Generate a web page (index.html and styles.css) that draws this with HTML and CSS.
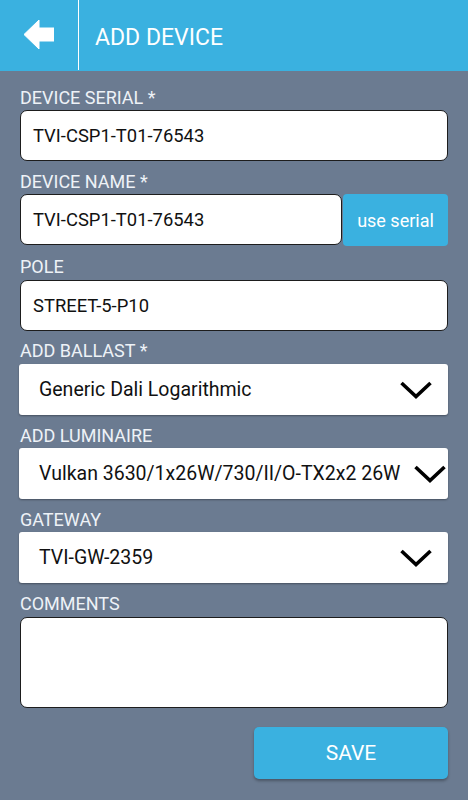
FILE: index.html
```html
<!DOCTYPE html>
<html>
<head>
<meta charset="utf-8">
<link rel="stylesheet" href="styles.css">
</head>
<body>
<header class="topbar">
  <div class="back">
    <svg width="30" height="29" viewBox="0 0 30 29"><path d="M0 14.5 L15 0 L15 8 L30 8 L30 21 L15 21 L15 29 Z" fill="#fff" stroke="#fff" stroke-width="1" stroke-linejoin="round"/></svg>
  </div>
  <div class="title">ADD DEVICE</div>
</header>
<main class="form">
  <div class="group first">
    <div class="label">DEVICE SERIAL *</div>
    <div class="input">TVI-CSP1-T01-76543</div>
  </div>
  <div class="group">
    <div class="label">DEVICE NAME *</div>
    <div class="row">
      <div class="input name">TVI-CSP1-T01-76543</div>
      <div class="use-serial">use serial</div>
    </div>
  </div>
  <div class="group">
    <div class="label">POLE</div>
    <div class="input">STREET-5-P10</div>
  </div>
  <div class="group">
    <div class="label">ADD BALLAST *</div>
    <div class="select"><span class="val">Generic Dali Logarithmic</span><svg class="chev" width="34" height="20" viewBox="0 0 34 20"><polyline points="2.5,3 17,16.5 31.5,3" fill="none" stroke="#000" stroke-width="3.6"/></svg></div>
  </div>
  <div class="group">
    <div class="label">ADD LUMINAIRE</div>
    <div class="select"><span class="val">Vulkan 3630/1x26W/730/II/O-TX2x2 26W</span><svg class="chev" width="34" height="20" viewBox="0 0 34 20"><polyline points="2.5,3 17,16.5 31.5,3" fill="none" stroke="#000" stroke-width="3.6"/></svg></div>
  </div>
  <div class="group">
    <div class="label">GATEWAY</div>
    <div class="select"><span class="val">TVI-GW-2359</span><svg class="chev" width="34" height="20" viewBox="0 0 34 20"><polyline points="2.5,3 17,16.5 31.5,3" fill="none" stroke="#000" stroke-width="3.6"/></svg></div>
  </div>
  <div class="group">
    <div class="label">COMMENTS</div>
    <div class="textarea"></div>
  </div>
  <div class="actions">
    <div class="save">SAVE</div>
  </div>
</main>
</body>
</html>
```
FILE: styles.css
```css
* { box-sizing: border-box; }
html, body {
  margin: 0;
  padding: 0;
  background: #6b7b91;
  font-family: Roboto, "Liberation Sans", sans-serif;
  width: 468px;
  height: 800px;
  overflow: hidden;
}
.topbar {
  height: 71px;
  background: #3ab1e0;
  display: flex;
  align-items: stretch;
}
.back {
  width: 79px;
  border-right: 1px solid #ffffff;
  display: flex;
  align-items: center;
  padding-left: 24px;
  padding-bottom: 2px;
  margin-bottom: 1px;
}
.back svg { display: block; }
.title {
  display: flex;
  align-items: center;
  padding-left: 16px;
  padding-top: 4px;
  color: #ffffff;
  font-size: 23px;
}
.form {
  padding: 0 20px;
}
.group {
  padding-top: 10.8px;
}
.group.first {
  padding-top: 16.5px;
}
.label {
  color: #eef2f7;
  font-size: 18px;
  line-height: 20px;
  margin-bottom: 2.5px;
}
.input {
  height: 51px;
  background: #fff;
  border: 1.5px solid #1d1d1d;
  border-radius: 7px;
  display: flex;
  align-items: center;
  padding-left: 12px;
  font-size: 18.4px;
  color: #111;
}
.row {
  display: flex;
  gap: 1px;
}
.input.name {
  width: 322px;
}
.use-serial {
  flex: 1;
  height: 52px;
  background: #3ab1e0;
  border-radius: 4px;
  color: #fff;
  font-size: 18px;
  display: flex;
  align-items: center;
  justify-content: center;
}
.select {
  height: 51px;
  margin-left: -1px;
  background: #fff;
  border-radius: 3px;
  box-shadow: 0 1px 2px rgba(0, 0, 0, 0.35);
  display: flex;
  align-items: center;
  padding: 0 15px 0 20px;
  font-size: 19.5px;
  color: #111;
}
.select .val {
  flex: none;
  white-space: nowrap;
  margin-right: 13px;
}
.select .chev {
  flex: none;
  margin-left: auto;
  display: block;
  margin-top: 1px;
}
.textarea {
  height: 91px;
  background: #fff;
  border: 1.5px solid #1d1d1d;
  border-radius: 7px;
}
.actions {
  display: flex;
  justify-content: flex-end;
  padding-top: 19.5px;
}
.save {
  width: 194px;
  height: 52px;
  background: #3ab1e0;
  border-radius: 5px;
  box-shadow: 0 2px 3px rgba(0, 0, 0, 0.3);
  color: #fff;
  font-size: 21px;
  display: flex;
  align-items: center;
  justify-content: center;
}
```
